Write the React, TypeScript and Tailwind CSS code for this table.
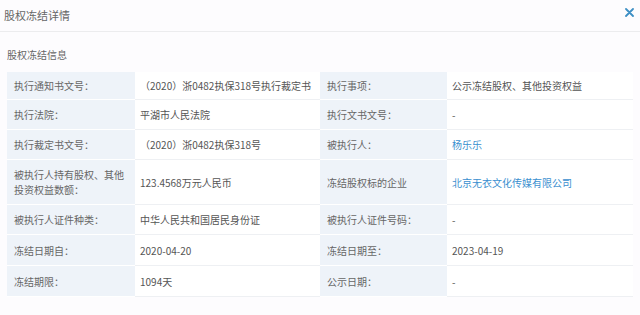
const rows: { h: string; cells: [string, string, string, string]; link?: [boolean, boolean] }[] = [
  { h: 'h-[28px]', cells: ['执行通知书文号：', '（2020）浙0482执保318号执行裁定书', '执行事项：', '公示冻结股权、其他投资权益'] },
  { h: 'h-[30px]', cells: ['执行法院：', '平湖市人民法院', '执行文书文号：', '-'] },
  { h: 'h-[30px]', cells: ['执行裁定书文号：', '（2020）浙0482执保318号', '被执行人：', '杨乐乐'], link: [false, true] },
  { h: 'h-[45px]', cells: ['被执行人持有股权、其他投资权益数额：', '123.4568万元人民币', '冻结股权标的企业', '北京无衣文化传媒有限公司'], link: [false, true] },
  { h: 'h-[30px]', cells: ['被执行人证件种类：', '中华人民共和国居民身份证', '被执行人证件号码：', '-'] },
  { h: 'h-[31px]', cells: ['冻结日期自：', '2020-04-20', '冻结日期至：', '2023-04-19'] },
  { h: 'h-[31px]', cells: ['冻结期限：', '1094天', '公示日期：', '-'] },
];

export default function App() {
  return (
    <div
      className="w-[640px] h-[315px] bg-[#fdfcfe] overflow-hidden"
      style={{ fontFamily: '"Noto Sans CJK SC", "Liberation Sans", sans-serif' }}
    >
      {/* Header */}
      <div className="h-[32px] flex items-center justify-between pl-[4px] pr-[6px] border-b border-[#ececee]">
        <span className="text-[11px] text-[#666]">股权冻结详情</span>
        <svg width="9" height="9" viewBox="0 0 9 9" className="mb-[6px]">
          <path d="M1 1L8 8M8 1L1 8" stroke="#3d8fc4" strokeWidth="1.8" strokeLinecap="round" />
        </svg>
      </div>

      <div className="mt-[16px] pl-[7px] text-[10px] leading-[14px] text-[#666]">股权冻结信息</div>

      {/* Table */}
      <div className="mt-[10px] mx-[7px] w-[626px] grid grid-cols-[128px_185px_127px_186px] text-[10px] leading-[15px]">
        {rows.map((r, i) =>
          r.cells.map((c, j) => {
            const isLabel = j % 2 === 0;
            const isLink = !isLabel && !!r.link && r.link[j === 1 ? 0 : 1];
            const color = isLabel ? 'text-[#666]' : isLink ? 'text-[#3a8fcf]' : 'text-[#555]';
            return (
              <div
                key={`${i}-${j}`}
                className={`${r.h} flex items-center border-b ${color} ${
                  isLabel
                    ? 'bg-[#eef3f9] border-white pl-[7px] pr-[8px]'
                    : 'bg-white border-[#eef0f3] pl-[5px]'
                }`}
              >
                {c}
              </div>
            );
          })
        )}
      </div>
    </div>
  );
}
